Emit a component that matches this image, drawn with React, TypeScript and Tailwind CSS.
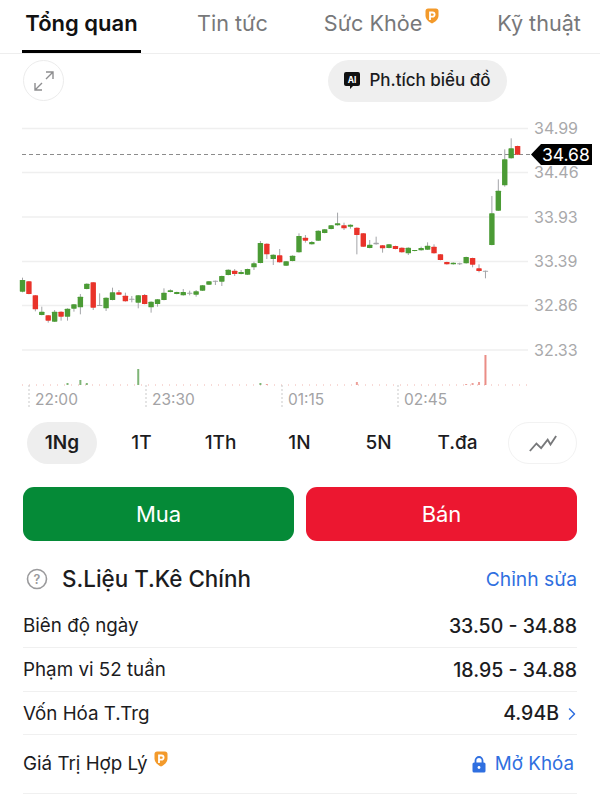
import { ChevronRight } from "lucide-react";

// candle data read off the chart: kind, wick top, body top, body bottom, wick bottom (in 1/3 px from y=110)
type Candle = ["g" | "r" | "n", number, number, number, number];

const candles: Candle[] = [
  ["g", 503, 510, 545, 547], ["r", 513, 514, 552, 553], ["r", 555, 556, 598, 604], ["g", 590, 605, 615, 616],
  ["r", 615, 616, 632, 638], ["g", 600, 605, 635, 636], ["r", 604, 605, 620, 632], ["g", 595, 596, 620, 632],
  ["g", 582, 583, 596, 605], ["g", 552, 560, 592, 613], ["g", 520, 521, 537, 538], ["r", 516, 517, 593, 600],
  ["n", 550, 585, 587, 588], ["g", 562, 563, 595, 603], ["g", 533, 547, 570, 571], ["r", 540, 547, 554, 555],
  ["r", 548, 557, 574, 575], ["n", 558, 566, 568, 577], ["g", 555, 556, 578, 595], ["r", 552, 555, 582, 583],
  ["g", 574, 575, 592, 608], ["g", 567, 568, 582, 590], ["g", 535, 548, 570, 571], ["g", 538, 541, 546, 547],
  ["g", 545, 546, 552, 553], ["g", 537, 546, 556, 557], ["n", 542, 548, 550, 556], ["g", 540, 544, 554, 560],
  ["g", 525, 526, 542, 543], ["g", 513, 514, 524, 525], ["n", 512, 512, 514, 525], ["g", 497, 498, 515, 528],
  ["g", 478, 479, 495, 496], ["r", 477, 482, 492, 498], ["g", 480, 486, 492, 493], ["g", 476, 477, 494, 495],
  ["g", 455, 460, 472, 480], ["g", 393, 399, 459, 460], ["r", 400, 401, 433, 447], ["g", 433, 434, 447, 465],
  ["r", 417, 436, 457, 458], ["g", 453, 454, 467, 468], ["g", 436, 437, 453, 454], ["g", 370, 378, 427, 428],
  ["r", 375, 383, 392, 398], ["g", 393, 396, 403, 404], ["g", 361, 362, 392, 393], ["g", 357, 358, 369, 370],
  ["g", 345, 346, 357, 358], ["g", 308, 340, 346, 347], ["r", 338, 346, 355, 360], ["g", 343, 344, 350, 356],
  ["r", 352, 353, 375, 433], ["r", 369, 370, 410, 411], ["g", 390, 404, 414, 415], ["n", 380, 398, 403, 404],
  ["r", 405, 406, 415, 428], ["g", 402, 403, 414, 415], ["r", 407, 408, 417, 418], ["r", 412, 413, 427, 428],
  ["g", 412, 413, 430, 435], ["g", 420, 420, 423, 424], ["g", 410, 414, 421, 422], ["g", 397, 407, 419, 420],
  ["r", 403, 410, 430, 431], ["r", 432, 433, 450, 451], ["r", 455, 456, 463, 464], ["g", 457, 458, 463, 464],
  ["n", 458, 460, 463, 465], ["g", 440, 441, 460, 461], ["r", 443, 444, 464, 472], ["r", 463, 475, 483, 487],
  ["n", 482, 482, 484, 505], ["g", 258, 310, 405, 406], ["g", 208, 242, 302, 303], ["g", 118, 148, 226, 230],
  ["g", 85, 115, 145, 146], ["r", 107, 108, 134, 135],
];

// volume bars: candle index, height, colour
const volumes: [number, number, string][] = [
  [9, 5, "#7fb577"], [7, 2, "#7fb577"], [10, 2, "#7fb577"], [18, 16, "#7fb577"], [37, 2, "#7fb577"],
  [38, 1, "#eda09a"], [52, 3, "#eda09a"], [71, 3, "#eda09a"], [72, 30, "#ea8d86"], [70, 2, "#eda09a"],
  [69, 1, "#eda09a"],
];

const gridRows = [
  { y: 128.5, label: "34.99" },
  { y: 172.5, label: "34.46" },
  { y: 217, label: "33.93" },
  { y: 261.5, label: "33.39" },
  { y: 305.5, label: "32.86" },
  { y: 350, label: "32.33" },
];

const timeLabels = [
  { x: 29, label: "22:00" },
  { x: 146, label: "23:30" },
  { x: 282, label: "01:15" },
  { x: 398, label: "02:45" },
];

const colors = { g: "#4b9b35", r: "#e9332a", n: "#a3a5a8" };

function ProBadge({ className }: { className: string }) {
  return (
    <svg viewBox="0 0 14 16" className={className}>
      <path d="M.5 3C.5 1.5 1.5.5 3 .5h8c1.5 0 2.5 1 2.5 2.5v4.5c0 3.5-3 6.5-6.5 8-3.5-1.5-6.5-4.5-6.5-8z" fill="#f39a2b" />
      <path d="M5 12V4.5h2.5a2 2 0 0 1 0 4.2H5" fill="none" stroke="#fff" strokeWidth="1.8" />
    </svg>
  );
}

function Chart() {
  return (
    <svg width="600" height="302" viewBox="0 110 600 302" className="block" fontFamily="Inter, sans-serif">
      {gridRows.map((r) => (
        <g key={r.label}>
          <line x1="22" x2="528" y1={r.y} y2={r.y} stroke="#efefef" strokeWidth="1.5" />
          <text x="534" y={r.y + 5.5} fontSize="16" fill="#a9a9ab">{r.label}</text>
        </g>
      ))}
      <line x1="22" x2="530" y1="154.5" y2="154.5" stroke="#8c8c8c" strokeWidth="1" strokeDasharray="4 3" />
      {candles.map((c, i) => {
        const x = 22.5 + i * 6.43;
        const y = (v: number) => 110 + v / 3;
        return (
          <g key={i}>
            <line x1={x} x2={x} y1={y(c[1])} y2={y(c[4])} stroke="#a3a5a8" strokeWidth="1" />
            <rect x={x - 2.7} y={y(c[2])} width="5.4" height={Math.max(1, (c[3] - c[2]) / 3)} rx="0.6" fill={colors[c[0]]} />
          </g>
        );
      })}
      <line x1="22" x2="528" y1="385" y2="385" stroke="#f0b4ae" strokeWidth="1" strokeDasharray="1 6" />
      {volumes.map(([i, h, fill]) => (
        <rect key={i} x={21.5 + i * 6.43} y={385 - h} width="2" height={h} fill={fill} />
      ))}
      {timeLabels.map((t) => (
        <g key={t.label}>
          <line x1={t.x} x2={t.x} y1="385" y2="408" stroke="#c9c9c9" strokeWidth="1" strokeDasharray="2 2" />
          <text x={t.x + 6} y="405" fontSize="15.5" fill="#a3a3a5">{t.label}</text>
        </g>
      ))}
      {/* current price tag */}
      <path d="M531 154.5 L541 144 H592 V165 H541 Z" fill="#000" />
      <text x="542" y="160.5" fontSize="17.5" fill="#fff">34.68</text>
    </svg>
  );
}

export default function App() {
  const ranges = ["1T", "1Th", "1N", "5N", "T.đa"];
  return (
    <div className="w-[600px] h-[800px] overflow-hidden bg-white text-[#1c1c1e] font-['Inter',sans-serif]">
      {/* tabs */}
      <div className="flex items-start h-[54px] border-b border-[#eeeeee] pl-[22px] text-[21.6px] leading-[46px]">
        <div className="w-[119px] h-[53px] border-b-[3px] border-black font-semibold text-[22px] text-center text-[#111]">Tổng quan</div>
        <div className="ml-[56px] text-[#77787a]">Tin tức</div>
        <div className="ml-[56px] text-[#77787a] flex">
          Sức Khỏe
          <ProBadge className="w-[14px] h-[16px] mt-[8px] ml-[3px]" />
        </div>
        <div className="ml-[58px] text-[#77787a]">Kỹ thuật</div>
      </div>

      {/* chart tools */}
      <div className="flex items-center justify-between h-[56px] pl-[23px] pr-[93px] pb-[3px]">
        <div className="w-[41px] h-[41px] rounded-full border border-[#ececec] flex items-center justify-center">
          <svg viewBox="0 0 22 22" className="w-[22px] h-[22px]" fill="none" stroke="#8e8e90" strokeWidth="1.4">
            <path d="M13 2h7v7M20 2l-7 7M2 13v7h7M2 20l7-7" />
          </svg>
        </div>
        <div className="w-[179px] h-[42px] rounded-full bg-[#efefef] flex items-center justify-center gap-[9px] text-[17px] font-medium">
          <svg viewBox="0 0 16 17" className="w-[16px] h-[17px]">
            <path d="M2 0h12a2 2 0 0 1 2 2v10a2 2 0 0 1-2 2H9l-3 3v-3H2a2 2 0 0 1-2-2V2a2 2 0 0 1 2-2z" fill="#111" />
            <text x="8" y="10.5" textAnchor="middle" fontSize="8.5" fontWeight="700" fill="#fff">AI</text>
          </svg>
          Ph.tích biểu đồ
        </div>
      </div>

      <Chart />

      {/* range selector */}
      <div className="flex items-center h-[42px] mt-[10px] pl-[27px] pr-[23px] text-[19px]">
        <div className="w-[70px] h-[42px] rounded-full bg-[#eeeeee] flex items-center justify-center font-semibold">1Ng</div>
        <div className="flex flex-1 font-medium">
          {ranges.map((r) => (
            <div key={r} className="w-[79px] text-center first:ml-[5px]">{r}</div>
          ))}
        </div>
        <div className="w-[69px] h-[42px] rounded-full border border-[#f2f2f2] flex items-center justify-center">
          <svg viewBox="0 0 32 20" className="w-[30px] h-[19px]" fill="none" stroke="#77787a" strokeWidth="2">
            <path d="M2 18l7-8 5 5 7-9 3 5 6-9" />
          </svg>
        </div>
      </div>

      {/* buy / sell */}
      <div className="flex gap-[12px] mt-[23px] mx-[23px] text-[22px] text-white">
        <div className="flex-1 h-[54px] rounded-[11px] bg-[#058a37] flex items-center justify-center">Mua</div>
        <div className="flex-1 h-[54px] rounded-[11px] bg-[#ec1730] flex items-center justify-center">Bán</div>
      </div>

      {/* key stats */}
      <div className="flex items-center justify-between h-[50px] mt-[13px] ml-[23px] mr-[23px]">
        <div className="flex items-center text-[22.4px] font-medium text-[#1c1c1e]">
          <svg viewBox="0 0 22 22" className="w-[22px] h-[22px] ml-[3px] mr-[14px]" fill="none">
            <circle cx="11" cy="11" r="9.5" stroke="#9a9a9c" strokeWidth="1.6" />
            <text x="11" y="15.5" textAnchor="middle" fontSize="12.5" fontWeight="600" fill="#9a9a9c">?</text>
          </svg>
          S.Liệu T.Kê Chính
        </div>
        <div className="text-[19.3px] text-[#2f6fe0]">Chỉnh sửa</div>
      </div>
      <div className="mx-[23px] text-[18.8px] text-[#1c1c1e]">
        <div className="flex items-center justify-between h-[44px] pt-[2px] border-b border-[#f0f0f0]">
          <span>Biên độ ngày</span>
          <span className="font-medium text-[19.5px]">33.50 - 34.88</span>
        </div>
        <div className="flex items-center justify-between h-[44px] pt-[2px] border-b border-[#f0f0f0]">
          <span>Phạm vi 52 tuần</span>
          <span className="font-medium text-[19.5px]">18.95 - 34.88</span>
        </div>
        <div className="flex items-center justify-between h-[43px] pt-[2px] border-b border-[#f0f0f0]">
          <span>Vốn Hóa T.Trg</span>
          <span className="flex items-center font-medium text-[19.5px]">
            4.94B
            <ChevronRight className="w-[20px] h-[20px] ml-[3px] mr-[-5px] text-[#2f6fe0]" strokeWidth={1.8} />
          </span>
        </div>
        <div className="flex items-center justify-between h-[59px] border-b border-[#f0f0f0]">
          <span className="flex">
            Giá Trị Hợp Lý
            <ProBadge className="w-[14px] h-[16px] mt-[1px] ml-[6px]" />
          </span>
          <span className="flex items-center text-[#2f6fe0] mr-[3px]">
            <svg viewBox="0 0 14 17" className="w-[14px] h-[17px] mr-[9px]">
              <path d="M3.5 7V4.5a3.5 3.5 0 0 1 7 0V7" fill="none" stroke="#2f6fe0" strokeWidth="1.8" />
              <rect x="0.5" y="6.5" width="13" height="10" rx="1.6" fill="#2f6fe0" />
              <circle cx="7" cy="11.5" r="1.4" fill="#fff" />
            </svg>
            Mở Khóa
          </span>
        </div>
      </div>
    </div>
  );
}
